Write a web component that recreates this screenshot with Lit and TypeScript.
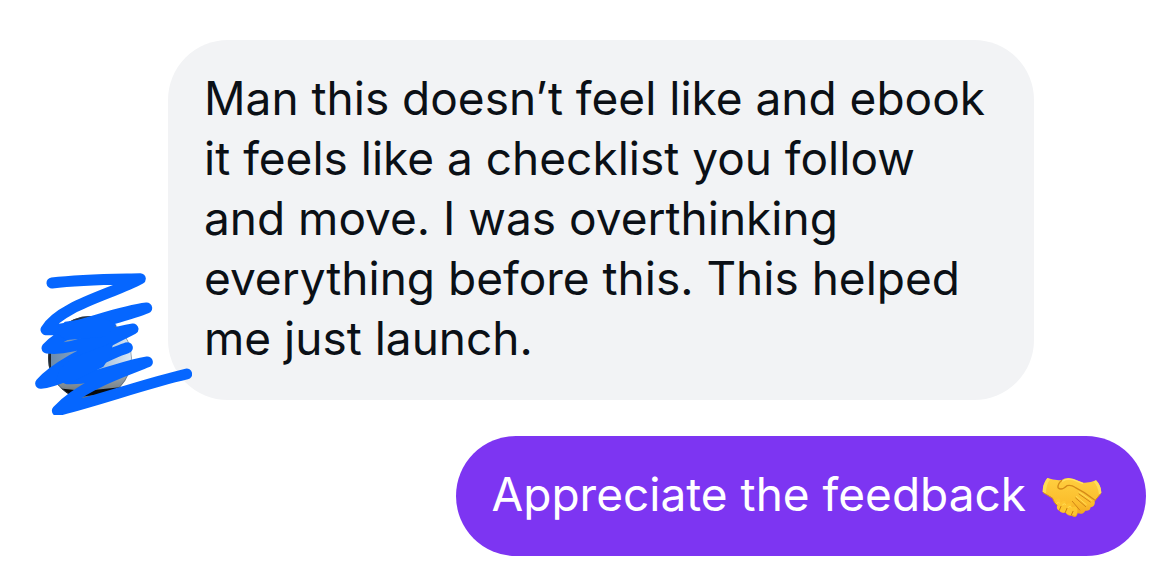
import { LitElement, html, css } from "lit";
import { customElement } from "lit/decorators.js";

@customElement("chat-avatar")
class ChatAvatar extends LitElement {
  static styles = css`
    :host { display: block; position: relative; width: 84px; height: 84px; flex: none; }
    .photo { display: block; width: 100%; height: 100%; }
    .scribble { position: absolute; left: -23px; top: -51px; width: 167px; height: 150px; z-index: 1; }
  `;
  render() {
    return html`
      <svg class="photo" viewBox="0 0 84 84" role="img" aria-label="Profile photo">
        <defs>
          <clipPath id="round"><circle cx="42" cy="42" r="42" /></clipPath>
          <linearGradient id="sky" x1="0" y1="0" x2="1" y2="0">
            <stop offset="0" stop-color="#6888aa" />
            <stop offset=".5" stop-color="#8faed0" />
            <stop offset="1" stop-color="#dbe9f7" />
          </linearGradient>
          <linearGradient id="sea" x1="0" y1="0" x2="0" y2="1">
            <stop offset="0" stop-color="#a9b4bd" />
            <stop offset="1" stop-color="#59646a" />
          </linearGradient>
        </defs>
        <g clip-path="url(#round)">
          <rect width="84" height="84" fill="url(#sky)" />
          <path d="M0 0H60L52 6Q28 3 12 19L3 32V56L12 70H0Z" fill="#20242a" />
          <path d="M18 5H68V14L20 20Z" fill="#5e6d7c" />
          <path d="M8 61L84 54V84H8Z" fill="url(#sea)" />
          <path d="M12 66L40 64L72 60" stroke="#c3c8c8" stroke-width="2" fill="none" />
          <path d="M8 72L36 75L84 70V84H8Z" fill="#090a0b" />
          <path d="M30 81L56 78L54 84H30Z" fill="#707574" />
          <circle cx="42" cy="42" r="41.5" fill="none" stroke="#48535d" stroke-opacity=".5" />
        </g>
      </svg>
      <svg class="scribble" viewBox="0 0 501 450" aria-hidden="true">
        <path
          d="M81 54C170 43 255 43 346 41C270 84 105 122 63 194C140 201 258 142 365 129C285 164 120 185 66 249C150 260 238 202 324 192C245 234 105 290 47 355C125 346 215 278 307 248C253 269 165 293 126 341C205 346 278 306 367 291C290 322 170 360 97 437C225 405 360 356 485 327"
          fill="none" stroke="#0566ff" stroke-width="33" stroke-linecap="round" stroke-linejoin="round" />
        <path d="M85 200L120 170L230 155L275 180L240 215L125 225ZM105 312L150 276L265 232L255 275L235 305L145 350L92 350Z" fill="#0566ff" />
      </svg>
    `;
  }
}

@customElement("handshake-icon")
class HandshakeIcon extends LitElement {
  static styles = css`
    :host { display: inline-block; width: 60px; height: 42px; margin-left: 3px; vertical-align: -7px; }
    svg { display: block; width: 100%; height: 100%; }
  `;
  render() {
    return html`
      <svg viewBox="36 34 180 126" role="img" aria-label="Handshake">
        <defs>
          <linearGradient id="skin" x1="0" y1="0" x2="0" y2="1">
            <stop offset="0" stop-color="#ffcf40" />
            <stop offset=".65" stop-color="#fbbd2c" />
            <stop offset="1" stop-color="#ee9f20" />
          </linearGradient>
        </defs>
        <path d="M52 40Q38 58 38 82L67 99Q73 116 82 122Q78 132 89 139Q98 147 106 143Q112 155 125 153Q139 164 143 146Q160 151 166 138Q180 140 182 128Q197 125 194 108L214 84Q213 62 198 47Q182 55 160 54L129 42Q107 37 96 46Q73 48 52 40Z" fill="url(#skin)" />
        <path d="M52 40Q38 58 38 82L48 87Q47 60 61 44ZM198 47Q213 62 214 84L207 91Q205 65 191 51Z" fill="#ffdc58" />
        <path d="M76 107Q94 92 91 115Q108 100 108 120Q124 109 125 128Q143 119 142 139Q140 160 128 150Q116 156 107 143Q95 147 88 138Q77 132 82 122Z" fill="#fdc530" />
        <g fill="none" stroke-linecap="round" stroke-linejoin="round">
          <path d="M96 47Q83 57 84 69Q94 79 111 63Q124 60 135 68Q164 82 193 105" stroke="#d48a18" stroke-width="4" />
          <path d="M98 49Q110 40 129 45L158 56" stroke="#ffe261" stroke-width="4" />
          <path d="M147 88L181 112M137 100L167 126M127 110L149 136" stroke="#d08518" stroke-width="3" />
          <path d="M88 137L93 125M106 143L111 131M124 151L129 140" stroke="#c97c14" stroke-width="3" />
          <path d="M147 82L184 107M139 95L169 120M80 116Q87 109 89 115M98 120Q105 113 107 120M114 128Q121 121 124 128" stroke="#ffdc55" stroke-width="3" />
          <path d="M40 84L68 101Q72 115 81 122M194 109L211 88" stroke="#dc901b" stroke-width="3" />
        </g>
      </svg>
    `;
  }
}

@customElement("app-root")
class AppRoot extends LitElement {
  static styles = css`
    :host {
      display: block;
      background: #fff;
      font-family: Inter, "Liberation Sans", sans-serif;
      font-size: 46px;
      line-height: 60px;
    }
    .thread { display: flex; flex-direction: column; gap: 36px; padding: 40px 24px 16px 48px; }
    .row { display: flex; align-items: flex-end; gap: 36px; }
    .incoming { padding-right: 112px; }
    .outgoing { justify-content: flex-end; }
    .bubble { margin: 0; padding: 28px 36px 32px; border-radius: 60px; box-sizing: border-box; }
    .incoming .bubble { flex: 1; background: #f2f3f5; color: #0b1016; white-space: pre-line; }
    .outgoing .bubble { padding-right: 44px; background: #7d35f2; color: #fff; }
  `;
  render() {
    const message =
      "Man this doesn’t feel like and ebook\nit feels like a checklist you follow\nand move. I was overthinking\neverything before this. This helped\nme just launch.";
    return html`
      <main class="thread">
        <div class="row incoming">
          <chat-avatar></chat-avatar>
          <p class="bubble">${message}</p>
        </div>
        <div class="row outgoing">
          <p class="bubble">Appreciate the feedback <handshake-icon></handshake-icon></p>
        </div>
      </main>
    `;
  }
}
